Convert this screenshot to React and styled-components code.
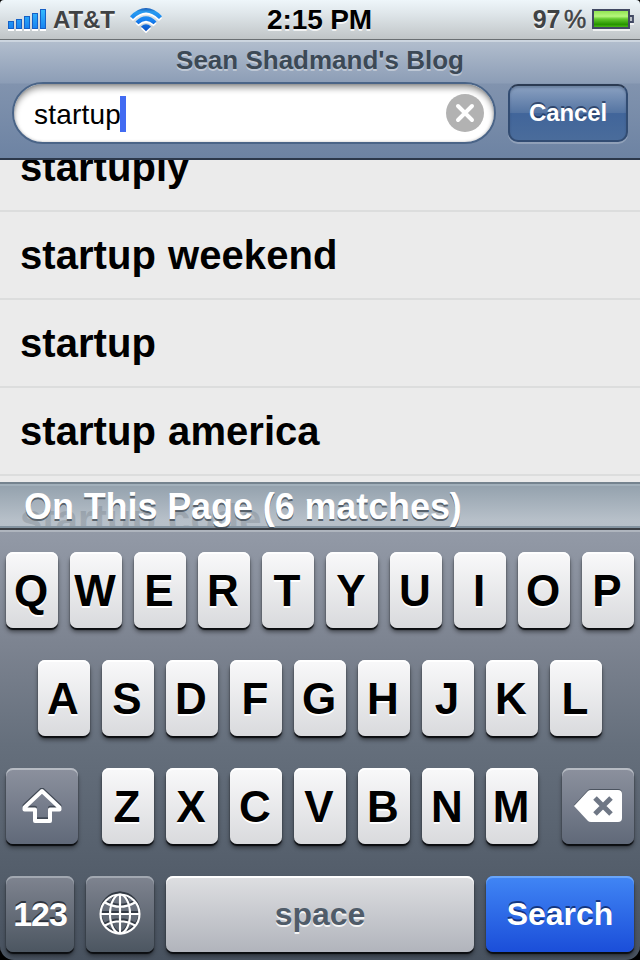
import React from "react"
import styled, { createGlobalStyle, css } from "styled-components"

const GlobalStyle = createGlobalStyle`
  * {
    box-sizing: border-box;
  }

  body {
    margin: 0;
    background: #000;
    font-family: "Liberation Sans", Arial, sans-serif;
  }
`

const Phone = styled.div`
  display: flex;
  flex-direction: column;
  width: 640px;
  height: 960px;
  overflow: hidden;
  background: #000;
`

const StatusBar = styled.div`
  display: grid;
  grid-template-columns: 1fr auto 1fr;
  align-items: center;
  flex: none;
  height: 40px;
  padding: 0 6px 0 8px;
  border-radius: 4px 4px 0 0;
  border-bottom: 1px solid #6b7073;
  background: linear-gradient(#eef6fa, #dfe6ea 35%, #c0c5c7);
  color: #404244;
  font-weight: bold;
  text-shadow: 0 2px 0 rgba(255, 255, 255, 0.75);
`

const StatusGroup = styled.div`
  display: flex;
  align-items: center;
  justify-content: ${props => (props.$end ? "flex-end" : "flex-start")};
`

const Carrier = styled.span`
  width: 62px;
  margin: 1px 15px 0 7px;
  font-size: 24px;
  letter-spacing: -0.1px;
  white-space: nowrap;
`

const Clock = styled.span`
  padding: 0 3px 0 0;
  color: #000;
  font-size: 28px;
  letter-spacing: -0.15px;
`

const Percent = styled.span`
  display: flex;
  gap: 4px;
  margin-right: 6px;
  font-size: 25px;
  letter-spacing: -0.3px;
`

const PercentSign = styled.span`
  font-weight: normal;
  -webkit-text-stroke: 0.5px #404244;
`

const Header = styled.header`
  flex: none;
  height: 120px;
  border-top: 2px solid #ccd5df;
  border-bottom: 2px solid #2c384b;
  background: linear-gradient(#b1bdcd, #8c9db6 41px, #8193ae 42px, #6d83a3);
`

const Title = styled.h1`
  margin: 0;
  height: 40px;
  color: #3c4956;
  font-size: 26px;
  line-height: 37px;
  text-align: center;
  text-shadow: 0 2px 0 rgba(255, 255, 255, 0.4);
`

const SearchRow = styled.div`
  display: flex;
  align-items: center;
  gap: 12px;
  padding: 0 12px;
`

const Field = styled.div`
  display: flex;
  align-items: center;
  width: 484px;
  height: 62px;
  padding: 0 10px 0 20px;
  border: 2px solid #4a6487;
  border-radius: 31px;
  background: #fff;
  box-shadow: inset 0 5px 6px -1px rgba(0, 0, 0, 0.4), inset 0 0 3px rgba(0, 0, 0, 0.25);
`

const Query = styled.span`
  padding-top: 3px;
  font-size: 28px;
  letter-spacing: 0.2px;
  color: #000;
`

const Caret = styled.span`
  width: 6px;
  height: 36px;
  margin: 2px auto 0 -1px;
  background: #426bf2;
`

const CancelButton = styled.button`
  width: 120px;
  height: 58px;
  padding: 0;
  border: 2px solid #324c72;
  border-top-color: #2b3a52;
  border-radius: 10px;
  background: linear-gradient(#8ba1c1, #5474a2 50%, #41659a 51%, #4a6c9b);
  box-shadow: 0 2px 0 rgba(255, 255, 255, 0.22), inset 0 2px 2px rgba(40, 60, 90, 0.3);
  color: #fff;
  font: bold 24px "Liberation Sans", Arial, sans-serif;
  letter-spacing: -0.1px;
  text-shadow: 0 -2px 0 rgba(20, 40, 75, 0.65);
`

const Results = styled.div`
  position: relative;
  flex: none;
  height: 368px;
  overflow: hidden;
  background: #ebebeb;
`

const List = styled.ul`
  margin: -36px 0 0;
  padding: 0;
  list-style: none;
`

const Suggestion = styled.li`
  height: 88px;
  padding: 0 20px;
  border-bottom: 2px solid #dcdddd;
  color: #000;
  font-size: 40px;
  font-weight: bold;
  line-height: 86px;
  letter-spacing: 0.05px;
  word-spacing: 1px;
  font-kerning: none;
`

// Translucent bar, the row beneath shows through it
const SectionHeader = styled.div`
  position: absolute;
  left: 0;
  right: 0;
  bottom: 0;
  height: 46px;
  padding-left: 24px;
  border-top: 2px solid #75838f;
  border-bottom: 2px solid #8393a0;
  background: linear-gradient(rgba(139, 154, 167, 0.92), rgba(177, 187, 197, 0.9) 85%);
  box-shadow: inset 0 2px 0 #a2b0bb;
  color: #fff;
  font-size: 36px;
  font-weight: bold;
  line-height: 45px;
  letter-spacing: -0.1px;
  text-shadow: 0 2px 0 rgba(60, 70, 80, 0.75);
`

const Keyboard = styled.div`
  display: flex;
  flex-direction: column;
  flex: 1;
  gap: 32px;
  padding: 22px 6px 0;
  border-top: 2px solid #3b3f45;
  border-radius: 0 0 14px 14px;
  background: linear-gradient(#939aa7, #7c8390 27%, #656f7c 50%, #48525f);
  box-shadow: inset 0 2px 0 #afb5be;
`

const KeyRow = styled.div`
  display: flex;
  justify-content: ${props => (props.$spread ? "space-between" : "center")};
  gap: 12px;
`

const LetterGroup = styled.div`
  display: flex;
  gap: 12px;
`

const tones = {
  light: css`
    color: #000;
    background: linear-gradient(#f9f9fa, #d9dadd);
    box-shadow: inset 0 2px 0 #fff, 0 2px 1px #0b0d10, 0 4px 4px rgba(0, 0, 0, 0.45);
    text-shadow: 0 2px 0 #fff;
  `,
  dark: css`
    color: #fff;
    background: linear-gradient(#8c919e, #606979);
    box-shadow: inset 0 2px 0 #b6bbc3, 0 2px 1px #0b0d10, 0 4px 4px rgba(0, 0, 0, 0.4);
    text-shadow: 0 -2px 0 rgba(30, 36, 44, 0.7);
  `,
  deep: css`
    color: #fff;
    background: linear-gradient(#7f8490, #4c5661);
    box-shadow: inset 0 2px 0 #a2a8b1, 0 2px 1px #0b0d10, 0 4px 4px rgba(0, 0, 0, 0.4);
    text-shadow: 0 -2px 0 rgba(30, 36, 44, 0.8);
  `,
  space: css`
    color: #505c69;
    background: linear-gradient(#dedfe2, #b1b4bc);
    box-shadow: inset 0 2px 0 #fff, 0 2px 1px #0b0d10, 0 4px 4px rgba(0, 0, 0, 0.4);
    text-shadow: 0 2px 0 rgba(255, 255, 255, 0.85);
  `,
  blue: css`
    color: #fff;
    background: linear-gradient(#4186f5, #1b4ed9);
    box-shadow: inset 0 2px 0 #69a5fa, 0 2px 1px #0b0d10, 0 4px 4px rgba(0, 0, 0, 0.4);
    text-shadow: 0 -2px 0 rgba(10, 35, 95, 0.75);
  `,
}

const Key = styled.button`
  display: flex;
  flex: none;
  align-items: center;
  justify-content: center;
  width: ${props => props.$width || 52}px;
  height: 76px;
  padding: ${props => (props.$tone ? "0" : "2px 2px 0 0")};
  border: 0;
  border-radius: 7px;
  font: bold ${props => props.$size || 44}px "Liberation Sans", Arial, sans-serif;
  letter-spacing: ${props => props.$tracking || 0}px;
  ${props => tones[props.$tone || "light"]}
`

const SignalIcon = () => (
  <svg width="38" height="22" viewBox="0 0 38 22">
    <defs>
      <linearGradient id="signal" x1="0" y1="0" x2="0" y2="22" gradientUnits="userSpaceOnUse">
        <stop offset="0" stopColor="#35bcff" />
        <stop offset="1" stopColor="#147bed" />
      </linearGradient>
    </defs>
    {[8, 10, 13, 16, 20].map((height, i) => (
      <g key={height}>
        <rect x={i * 8} y={22 - height} width="6" height={height} fill="#fff" />
        <rect
          x={i * 8 + 0.5}
          y={20.5 - height}
          width="5"
          height={height - 1}
          fill="url(#signal)"
          stroke="#1560c6"
        />
      </g>
    ))}
  </svg>
)

const WifiShape = () => (
  <>
    <path d="M0 8.2Q16-8 32 8.2L29 11Q16-2 3 11Z" />
    <path d="M5.500 13.500Q16 3 26.500 13.500L23.600 16.300Q16 9 8.400 16.300Z" />
    <path d="M11 18.400Q16 14 21 18.400L16 23.200Z" />
  </>
)

const WifiIcon = () => (
  <svg width="32" height="24" viewBox="0 0 32 24" overflow="visible">
    <defs>
      <linearGradient id="wifi" x1="0" y1="0" x2="0" y2="24" gradientUnits="userSpaceOnUse">
        <stop offset="0" stopColor="#1a58b4" />
        <stop offset="0.16" stopColor="#299cef" />
        <stop offset="0.5" stopColor="#1682f2" />
        <stop offset="1" stopColor="#0a4bbd" />
      </linearGradient>
    </defs>
    <g fill="#fff" transform="translate(0 2)">
      <WifiShape />
    </g>
    <g fill="url(#wifi)">
      <WifiShape />
    </g>
  </svg>
)

const BatteryIcon = () => (
  <svg width="42" height="22" viewBox="0 0 42 22">
    <defs>
      <linearGradient id="battery" x1="0" y1="0" x2="0" y2="1">
        <stop offset="0" stopColor="#8be24b" />
        <stop offset="0.35" stopColor="#b6f67c" />
        <stop offset="0.5" stopColor="#62c92c" />
        <stop offset="0.8" stopColor="#269400" />
        <stop offset="1" stopColor="#55c51c" />
      </linearGradient>
    </defs>
    <path d="M1 21H38M38 15H42" stroke="#fff" strokeWidth="2" opacity="0.7" />
    <rect x="1" y="1" width="36" height="18" fill="url(#battery)" stroke="#414963" strokeWidth="2" />
    <path d="M38 7H41V13H38" fill="#bcc1c8" stroke="#414963" strokeWidth="1.800" />
  </svg>
)

const ClearIcon = () => (
  <svg width="38" height="38" viewBox="0 0 38 38">
    <circle cx="19" cy="19" r="19" fill="#b2b2b2" />
    <path d="M12 12L26 26M26 12L12 26" stroke="#fff" strokeWidth="4" strokeLinecap="round" />
  </svg>
)

const SHIFT = "M20 3L37.500 19.500V21.500H28V33H13V21.500H2.500V19.500Z"

const ShiftIcon = () => (
  <svg width="40" height="36" viewBox="0 0 40 36" fill="none" strokeWidth="4" strokeLinejoin="round">
    <path d={SHIFT} stroke="#414955" transform="translate(0 -1.700)" />
    <path d={SHIFT} stroke="#fff" />
  </svg>
)

const DeleteIcon = () => (
  <svg width="50" height="36" viewBox="0 0 50 36">
    <path d="M1 17L15 2Q16 1 18 1H45Q49 1 49 5V28Q49 32 45 32H18Q16 32 15 31Z" fill="#4b535f" />
    <path d="M1 18L15 3Q16 2 18 2H45Q49 2 49 6V30Q49 34 45 34H18Q16 34 15 33Z" fill="#fff" />
    <path d="M22 10L38 26M38 10L22 26" stroke="#6f7785" strokeWidth="5" />
  </svg>
)

const GlobeLines = () => (
  <>
    <circle cx="21" cy="21" r="19.500" />
    <ellipse cx="21" cy="21" rx="10" ry="19.500" />
    <path d="M21 1.500V40.500M1.500 21H40.500M6 9.500Q21 18 36 9.500M6 32.500Q21 24 36 32.500" />
  </>
)

const GlobeIcon = () => (
  <svg width="42" height="46" viewBox="0 -2 42 46" fill="none" strokeWidth="2.200">
    <g stroke="#323943" transform="translate(0 -1.800)">
      <GlobeLines />
    </g>
    <g stroke="#fff">
      <GlobeLines />
    </g>
  </svg>
)

const suggestions = ["startuply", "startup weekend", "startup", "startup america", "startup code"]

const Letters = ({ keys }) => keys.split("").map(letter => <Key key={letter}>{letter}</Key>)

const App = () => (
  <>
    <GlobalStyle />
    <Phone>
      <StatusBar>
        <StatusGroup>
          <SignalIcon />
          <Carrier>AT&amp;T</Carrier>
          <WifiIcon />
        </StatusGroup>
        <Clock>2:15 PM</Clock>
        <StatusGroup $end>
          <Percent>
            97<PercentSign>%</PercentSign>
          </Percent>
          <BatteryIcon />
        </StatusGroup>
      </StatusBar>
      <Header>
        <Title>Sean Shadmand's Blog</Title>
        <SearchRow>
          <Field>
            <Query>startup</Query>
            <Caret />
            <ClearIcon />
          </Field>
          <CancelButton>Cancel</CancelButton>
        </SearchRow>
      </Header>
      <Results>
        <List>
          {suggestions.map(text => (
            <Suggestion key={text}>{text}</Suggestion>
          ))}
        </List>
        <SectionHeader>On This Page (6 matches)</SectionHeader>
      </Results>
      <Keyboard>
        <KeyRow>
          <Letters keys="QWERTYUIOP" />
        </KeyRow>
        <KeyRow>
          <Letters keys="ASDFGHJKL" />
        </KeyRow>
        <KeyRow $spread>
          <Key $tone="dark" $width={72}>
            <ShiftIcon />
          </Key>
          <LetterGroup>
            <Letters keys="ZXCVBNM" />
          </LetterGroup>
          <Key $tone="dark" $width={72}>
            <DeleteIcon />
          </Key>
        </KeyRow>
        <KeyRow>
          <Key $tone="deep" $width={68} $size={34} $tracking={-1}>
            123
          </Key>
          <Key $tone="deep" $width={68}>
            <GlobeIcon />
          </Key>
          <Key $tone="space" $width={308} $size={32}>
            space
          </Key>
          <Key $tone="blue" $width={148} $size={32}>
            Search
          </Key>
        </KeyRow>
      </Keyboard>
    </Phone>
  </>
)

export default App
